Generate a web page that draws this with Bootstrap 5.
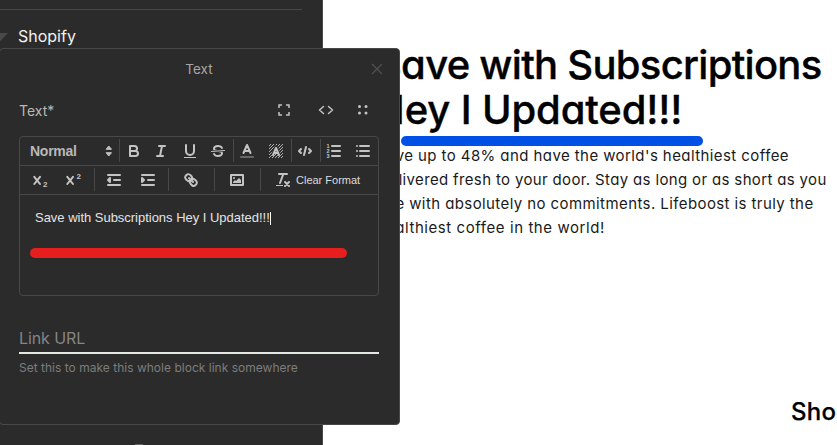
<!DOCTYPE html>
<html lang="en">
<head>
<meta charset="utf-8">
<meta name="viewport" content="width=device-width, initial-scale=1">
<title>Text block editor</title>
<link href="https://cdn.jsdelivr.net/npm/bootstrap@5.3.0/dist/css/bootstrap.min.css" rel="stylesheet">
<style>
body{font-family:Inter,"Liberation Sans",sans-serif;background:#fff;color:#000}
.screen{width:837px;height:445px}
.side{width:323px;background:#2b2b2b;border-right:1px solid #484848;color:#f2f2f2}
.side-rule{height:1px;width:302px;background:#484848;margin-top:9px}
.side-title{font-size:16px;line-height:20px;margin-top:16px;padding-left:18px}
.caret{left:-7px;top:33px}
.peek{left:135px;top:444px;width:8px;height:1px;background:#666}
.preview{padding:42px 0 0 52px}
.preview span{white-space:nowrap}
.preview h1{font-size:40px;line-height:45px;font-weight:500;-webkit-text-stroke:.35px #000;font-feature-settings:"cv11";color:#000}
.h-a{letter-spacing:-.72px;margin-left:1px}
.h-b{letter-spacing:-.13px}
.copy{font-size:15px;line-height:24px;font-feature-settings:"cv11";color:#1a1a1a;margin:12px 0 0}
.p-a{letter-spacing:.42px;margin-left:1px}
.p-b{letter-spacing:.35px;margin-left:5px}
.p-c{letter-spacing:.41px;margin-left:4px}
.p-d{letter-spacing:.57px;margin-left:1.5px}
.shop{font-size:24px;line-height:28px;font-weight:500;-webkit-text-stroke:.25px #000;font-feature-settings:"cv11";letter-spacing:.3px;margin-top:158px;margin-left:416px}
.blue-line{left:401px;top:136px;width:302px;height:10px;background:#0050e6;border-radius:5px}
.dialog{left:-1px;top:48px;width:401px;height:377px;background:#2b2b2b;border:1px solid #484848;border-radius:4px;color:#b8b8b8;padding:0 20px 0 19px}
.dlg-title{height:41px;font-size:13.5px;color:#a6a6a6}
.close{right:16px;top:14px}
.label-row{height:40px;font-size:14px}
.tools{padding-right:10px}
.t-code{margin-left:28px}
.t-dots{margin-left:23px}
.editor{height:160px;width:360px;border:1px solid #484848;border-radius:4px;margin-top:6px}
.bar{height:29px;border-bottom:1px solid #484848;padding:2px 0 3px}
.bar>div{width:29px;height:23px;display:flex;align-items:center;justify-content:center;flex:none;border-left:1px solid transparent;padding-right:2px}
.bar>.sep{border-left-color:#484848}
.bar svg,.ic{fill:none;stroke:#c4c4c4;stroke-width:2;stroke-linecap:round;stroke-linejoin:round}
.bar svg{display:block}
.bar .f{fill:#c4c4c4;stroke:none}
.bar .t{stroke-width:1}
.bar text{fill:#c4c4c4;stroke:none;font-family:"Liberation Sans",sans-serif;font-weight:700}
.bar>.w28{width:28px}
.bar>.bold{padding-right:0}
.bar>.pick{width:99px;justify-content:space-between;padding:0 1px 0 9px;font:700 14px "Liberation Sans",sans-serif;letter-spacing:-.25px;color:#b8b8b8}
.bar>.w40{width:40px}.bar>.w26{width:26px;margin-right:8px}.bar>.ind{margin-right:6px}.bar>.w46{width:46px}
.bar>.clear{width:118px;justify-content:flex-start;padding-left:13px;font:11px "Liberation Sans",sans-serif;color:#dcdcdc}
.typed{font:13px/16px "Liberation Sans",sans-serif;color:#e4e4e4;padding:15px 0 0 15px}
.typed span{letter-spacing:-.02px}
.cursor{width:1px;height:13px;background:#fff}
.red-line{width:317px;height:10px;border-radius:5px;background:#e61e1e;margin:22px 0 0 10px}
.link-field{width:360px;height:31px;margin-top:27px;border-bottom:2px solid #e3e8e3;font-size:16px;line-height:31px;letter-spacing:-.1px;color:#858585}
.hint{font-size:12px;line-height:16px;margin-top:6px;letter-spacing:.015px;color:#7d7d7d}
</style>
<script src="https://cdn.jsdelivr.net/npm/bootstrap@5.3.0/dist/js/bootstrap.bundle.min.js"></script>
</head>
<body>
<div class="screen d-flex position-relative overflow-hidden">
  <aside class="side flex-shrink-0 position-relative">
    <div class="side-rule"></div>
    <svg class="caret position-absolute" width="16" height="9"><path d="M0 0H15L7.500 8Z" fill="#484848"/></svg>
    <div class="side-title">Shopify</div>
    <div class="peek position-absolute"></div>
  </aside>
  <main class="preview flex-grow-1">
    <h1 class="mb-0"><span class="h-a">Save with Subscriptions</span><br><span class="h-b">Hey I Updated!!!</span></h1>
    <p class="copy"><span class="p-a">Save up to 48% and have the world's healthiest coffee</span><br><span class="p-b">delivered fresh to your door. Stay as long or as short as you</span><br><span class="p-c">like with absolutely no commitments. Lifeboost is truly the</span><br><span class="p-d">healthiest coffee in the world!</span></p>
    <div class="shop">Sho</div>
  </main>
  <div class="blue-line position-absolute"></div>

  <section class="dialog position-absolute">
    <div class="dlg-title d-flex align-items-center justify-content-center">Text</div>
    <svg class="close position-absolute" width="12" height="12" stroke="#505050" stroke-width="1.300"><path d="M1 1L11 11M11 1L1 11"/></svg>
    <div class="label-row d-flex align-items-center justify-content-between">
      <span>Text*</span>
      <div class="d-flex align-items-center tools">
        <svg class="ic" width="12" height="12"><path d="M1 4V1H4M8 1H11V4M11 8V11H8M4 11H1V8" stroke-width="1.500" stroke-linecap="butt" stroke-linejoin="miter"/></svg>
        <svg class="ic t-code" width="16" height="10"><path d="M5.500 1.500L1.500 5L5.500 8.500M10.500 1.500L14.500 5L10.500 8.500" stroke-width="1.500"/></svg>
        <svg class="t-dots" width="12" height="12" fill="#c4c4c4"><circle cx="2.500" cy="2.500" r="1.500"/><circle cx="9" cy="2.500" r="1.500"/><circle cx="2.500" cy="9" r="1.500"/><circle cx="9" cy="9" r="1.500"/></svg>
      </div>
    </div>
    <div class="editor">
      <div class="bar d-flex">
        <div class="pick"><span>Normal</span><svg width="18" height="18"><path stroke-width="1" fill="#c4c4c4" d="M6.500 10.700H11.500L9 13.700ZM6.500 7.300H11.500L9 4.300Z"/></svg></div>
        <div class="w28 sep bold"><svg width="18" height="18"><path d="M5 4H9.500A2.500 2.500 0 0 1 9.500 9H5ZM5 9H10.500A2.500 2.500 0 0 1 10.500 14H5Z"/></svg></div>
        <div><svg width="18" height="18"><path d="M7 4H13M5 14H11M8 14L10 4"/></svg></div>
        <div class="w28"><svg width="18" height="18"><path d="M5 3V9A4 4 0 0 0 13 9V3"/><rect class="f" x="3" y="15" width="12" height="1"/></svg></div>
        <div><svg width="18" height="18"><path class="t" d="M15.500 8.500L2.500 9.500"/><path class="f" d="M9.007,8C6.542,7.791,6,7.519,6,6.500,6,5.792,7.283,5,9,5c1.571,0,2.765.679,2.969,1.309a1,1,0,0,0,1.900-.617C13.356,4.106,11.354,3,9,3,6.200,3,4,4.538,4,6.500a3.200,3.200,0,0,0,.5,1.843Z"/><path class="f" d="M8.984,10C11.457,10.208,12,10.479,12,11.500c0,.708-1.283,1.500-3,1.500-1.571,0-2.765-.679-2.969-1.309a1,1,0,1,0-1.900.617C4.644,13.894,6.646,15,9,15c2.800,0,5-1.538,5-3.500a3.200,3.200,0,0,0-.5-1.843Z"/></svg></div>
        <div class="sep"><svg width="18" height="18"><path opacity=".4" d="M3 15H15"/><path d="M5.500 11L9 3L12.500 11M11.600 9H6.400"/></svg></div>
        <div><svg width="18" height="18"><defs><pattern id="hatch" width="3" height="3" patternUnits="userSpaceOnUse"><path d="M-1 1L1 -1M0 3L3 0M2 4L4 2" stroke="#c4c4c4" stroke-width=".9"/></pattern></defs><rect x="2" y="2" width="14" height="14" fill="url(#hatch)" stroke="none"/><path stroke="#2b2b2b" stroke-width="3.500" d="M6 12L9 5L12 12"/><path d="M6 13L9 6L12 13M11 11H7"/></svg></div>
        <div class="sep"><svg width="18" height="18"><path d="M5 7L3 9L5 11M13 7L15 9L13 11M10 5L8 13"/></svg></div>
        <div class="sep"><svg width="18" height="18"><path d="M7 4H15M7 9H15M7 14H15"/><text x="1.500" y="6" font-size="5.500">1</text><text x="1.500" y="11" font-size="5.500">2</text><text x="1.500" y="16" font-size="5.500">3</text></svg></div>
        <div><svg width="18" height="18"><path d="M6 4H15M6 9H15M6 14H15M3 4H3M3 9H3M3 14H3"/></svg></div>
      </div>
      <div class="bar d-flex">
        <div class="w40"><svg width="18" height="18"><path d="M3.300 5.800L9 13M9 5.800L3.300 13"/><text x="12" y="16" font-size="8">2</text></svg></div>
        <div class="w26"><svg width="18" height="18"><path d="M3.300 5.800L9 13M9 5.800L3.300 13"/><text x="12.500" y="8" font-size="8">2</text></svg></div>
        <div class="w40 sep"><svg width="18" height="18"><path d="M3 14H15M3 4H15M9 9H15"/><path d="M5 7V11L3 9Z" fill="#c4c4c4"/></svg></div>
        <div class="w28 ind"><svg width="18" height="18"><path d="M3 14H15M3 4H15M9 9H15"/><path d="M3 7V11L5 9Z" fill="#c4c4c4"/></svg></div>
        <div class="w46 sep"><svg width="18" height="18"><path d="M7 7L11 11"/><path d="M8.900,4.577a3.476,3.476,0,0,1,.36,4.679A3.476,3.476,0,0,1,4.577,8.900C3.185,7.500,2.035,6.400,4.217,4.217S7.500,3.185,8.900,4.577Z"/><path d="M13.423,9.100a3.476,3.476,0,0,0-4.679-.36,3.476,3.476,0,0,0,.36,4.679c1.392,1.392,2.500,2.542,4.679.36S14.815,10.500,13.423,9.100Z"/></svg></div>
        <div class="w46 sep"><svg width="18" height="18"><rect x="3" y="4" width="12" height="10"/><circle class="f" cx="6" cy="7" r="1"/><path class="f" d="M5 12V11L7 9L8 10L11 7L13 9V12Z"/></svg></div>
        <div class="clear sep"><svg width="18" height="18"><path d="M5 3H13M6 12L9.350 3M11 11L15 15M15 11L11 15"/><rect class="f" x="2" y="14" width="7" height="1"/></svg><span class="ps-1">Clear Format</span></div>
      </div>
      <div class="typed d-flex align-items-center"><span>Save with Subscriptions Hey I Updated!!!</span><i class="cursor"></i></div>
      <div class="red-line"></div>
    </div>
    <div class="link-field">Link URL</div>
    <div class="hint">Set this to make this whole block link somewhere</div>
  </section>
</div>
</body>
</html>
